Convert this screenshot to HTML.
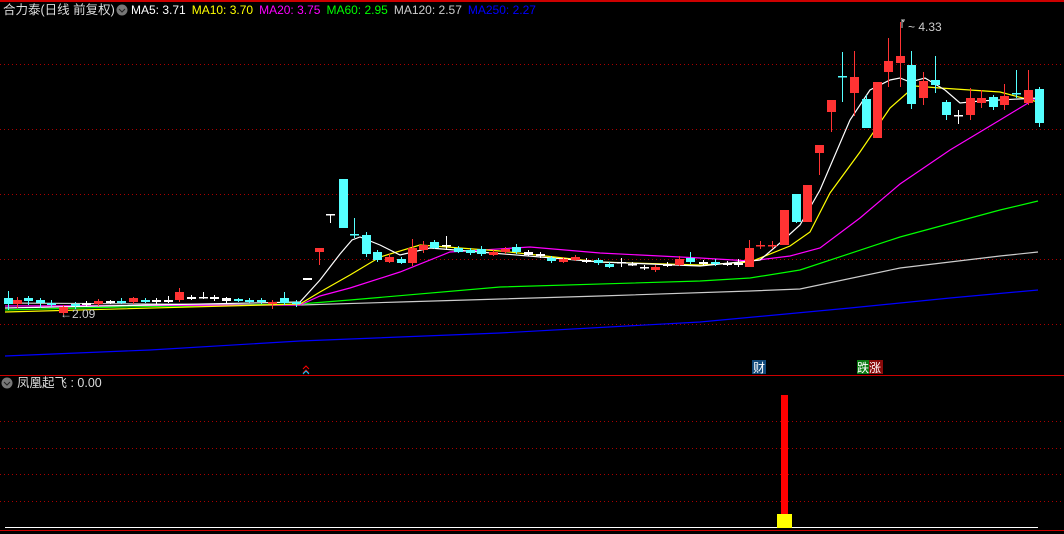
<!DOCTYPE html>
<html><head><meta charset="utf-8"><style>
body{margin:0;background:#000;width:1064px;height:534px;overflow:hidden;font-family:"Liberation Sans","Noto Sans CJK SC",sans-serif}
svg{position:absolute;left:0;top:0}
.t{position:absolute;font-size:12.5px;white-space:nowrap;line-height:14px}
.m span{margin-right:6px}
</style></head><body>
<svg width="1064" height="534" xmlns="http://www.w3.org/2000/svg">
<rect x="0" y="0" width="1064" height="2" fill="#c00"/>
<g stroke="#a00" stroke-dasharray="1 3" stroke-width="1">
<line x1="0" y1="64.5" x2="1064" y2="64.5"/><line x1="0" y1="129.5" x2="1064" y2="129.5"/>
<line x1="0" y1="194.5" x2="1064" y2="194.5"/><line x1="0" y1="259.5" x2="1064" y2="259.5"/>
<line x1="0" y1="324.5" x2="1064" y2="324.5"/>
<line x1="0" y1="421.5" x2="1064" y2="421.5"/><line x1="0" y1="448.5" x2="1064" y2="448.5"/>
<line x1="0" y1="474.5" x2="1064" y2="474.5"/><line x1="0" y1="501.5" x2="1064" y2="501.5"/>
</g>
<rect x="0" y="375" width="1064" height="1" fill="#c00"/>
<rect x="0" y="530" width="1064" height="1" fill="#c00"/>
<rect x="5" y="527" width="1033" height="1" fill="#fff"/>
<g fill="none" stroke-width="1.2">
<polyline stroke="#00f" points="5,356 150,350 300,341 500,333 700,322 850,308 950,298 1038,290"/>
<polyline stroke="#ccc" points="5,303 300,305 400,302 600,296 750,291 800,289 900,268 1000,256 1038,252"/>
<polyline stroke="#0f0" points="5,310 120,307 300,304 350,300 500,287 700,281 750,278 800,270 900,237 1000,210 1038,201"/>
<polyline stroke="#f0f" points="5,306 300,305 320,296 350,288 400,272 450,252 530,247 600,253 700,258 750,261 790,256 820,248 860,218 900,184 950,150 1000,120 1038,97"/>
<polyline stroke="#ff0" points="5,312 300,304 320,292 350,275 380,257 420,245 500,251 600,262 700,265 750,262 790,246 810,232 830,193 860,152 890,108 915,86 940,88 1000,92 1038,102"/>
<polyline stroke="#fff" points="5,308 300,302 320,280 340,254 352,240 360,237 380,245 400,255 430,248 480,252 600,262 700,266 760,260 780,243 800,225 820,190 850,120 870,90 890,80 900,78 910,82 925,78 945,90 960,103 980,101 1038,98"/>
</g>
<g id="c"></g>
<text x="60" y="318" fill="#ccc" font-size="12" font-family="Liberation Sans">←2.09</text>
<path d="M904,22 l-2,-2 h3 M902,20 v8" stroke="#ccc" fill="none"/>
<text x="908" y="31" fill="#ccc" font-size="12" font-family="Liberation Sans">~ 4.33</text>
<path d="M303,369 l3,-3 l3,3 M303,373 l3,-3 l3,3" stroke="#f00" fill="none"/>
<path d="M303,374 l3,-3 l3,3" stroke="#0cf" fill="none"/>
<rect x="752" y="360" width="14" height="14" fill="#124a7a"/>
<rect x="857" y="360" width="12" height="14" fill="#0a7a10"/>
<rect x="869" y="360" width="14" height="14" fill="#8a0a0a"/>
<text x="753" y="372" fill="#fff" font-size="12" font-family="Noto Sans CJK SC">财</text>
<text x="857" y="372" fill="#fff" font-size="12" font-family="Noto Sans CJK SC">跌涨</text>
<rect x="781" y="395" width="7" height="120" fill="#f00"/>
<rect x="777" y="514" width="15" height="14" fill="#ff0"/>
<circle cx="7" cy="383" r="5.5" fill="#777"/><path d="M4,382 l3,3 l3,-3" stroke="#222" fill="none"/>
<circle cx="122" cy="10" r="5.5" fill="#777"/><path d="M119,9 l3,3 l3,-3" stroke="#222" fill="none"/>
</svg>
<div class="t" style="left:3px;top:3px;color:#ddd">合力泰(日线 前复权)</div>
<div class="t m" style="left:131px;top:3px;font-size:12px"><span style="color:#fff">MA5: 3.71</span><span style="color:#ff0">MA10: 3.70</span><span style="color:#f0f">MA20: 3.75</span><span style="color:#0f0">MA60: 2.95</span><span style="color:#ccc">MA120: 2.57</span><span style="color:#00f">MA250: 2.27</span></div>
<div class="t" style="left:17px;top:376px;color:#ddd">凤凰起飞 : 0.00</div>
<script>
var R="#ff3333",C="#55ffff",W="#ffffff";
var d=[
[8,298,304,291,310,C],[17,300,304,297,308,R],[28,298,301,296,305,C],[40,300,303,298,308,C],[51,303,305,300,307,C],[63,307,313,305,315,R],[75,304,306,302,309,C],[86,303,305,301,307,W],[98,301,304,299,306,R],[110,301,303,300,304,W],[121,301,303,298,304,C],[133,298,302,297,304,R],[145,300,302,298,303,C],[156,300,302,298,304,W],[168,300,302,296,303,W],[179,292,300,288,302,R],[191,297,299,295,300,W],[203,297,298,292,299,W],[214,297,299,295,301,W],[226,298,301,297,303,W],[238,299,301,298,302,C],[249,300,302,298,303,C],[261,300,302,298,304,C],[272,302,304,300,309,R],[284,298,303,292,305,C],[296,302,304,300,307,C],
[307,278,280,278,280,W],[319,248,252,248,265,R],[330,214,215,214,223,W],[343,179,228,179,228,C],[354,234,235,218,238,C],[366,235,254,232,257,C],[377,252,260,250,262,C],[389,257,262,254,263,R],[401,259,263,257,264,C],[412,248,263,239,266,R],[423,245,250,241,253,R],[434,242,248,240,249,C],[446,245,246,236,250,W],[458,248,252,246,253,C],[470,250,253,248,255,C],[481,249,254,246,256,C],[493,252,255,250,256,R],[505,249,252,247,254,R],[516,247,252,244,254,C],[528,252,255,250,256,W],[540,254,256,252,258,W],[551,258,261,256,263,C],[563,259,262,257,263,R],[575,257,260,255,261,R],[586,260,262,258,263,W],[598,260,263,258,265,C],[609,264,267,262,268,C],[621,262,263,258,267,W],[632,264,265,262,266,W],[644,267,268,265,270,W],[655,267,270,265,272,R],[667,264,266,262,267,W],[679,259,265,256,266,R],[690,258,262,252,264,C],[703,262,264,260,266,W],[715,262,264,259,266,C],[727,263,265,261,266,W],[738,263,265,259,267,W],
[749,248,267,240,267,R],[760,245,246,241,249,R],[772,245,246,241,249,R],[784,210,245,210,245,R],[796,194,222,194,223,C],[807,185,222,185,222,R],[819,145,153,145,175,R],[831,100,112,100,132,R],[842,76,77,52,102,C],[854,77,93,51,116,R],[866,99,128,95,128,C],[877,82,138,82,138,R],[888,61,72,38,87,R],[900,56,63,22,87,R],[911,65,104,51,109,C],[923,81,98,72,105,R],[935,80,85,56,93,C],[946,102,115,100,120,C],[958,115,116,110,124,W],[970,98,115,88,120,R],[981,98,103,90,108,R],[993,97,107,95,110,C],[1004,96,105,84,110,R],[1016,93,94,70,98,C],[1028,90,103,70,105,R],[1039,89,123,87,127,C]];
var s="";d.forEach(function(c){var x=c[0],h=Math.max(c[2]-c[1],1.5);
s+='<line x1="'+(x+.5)+'" y1="'+c[3]+'" x2="'+(x+.5)+'" y2="'+c[4]+'" stroke="'+c[5]+'"/>';
s+='<rect x="'+(x-4)+'" y="'+c[1]+'" width="9" height="'+h+'" fill="'+c[5]+'"/>';});
document.getElementById("c").innerHTML=s;
</script>
</body></html>
